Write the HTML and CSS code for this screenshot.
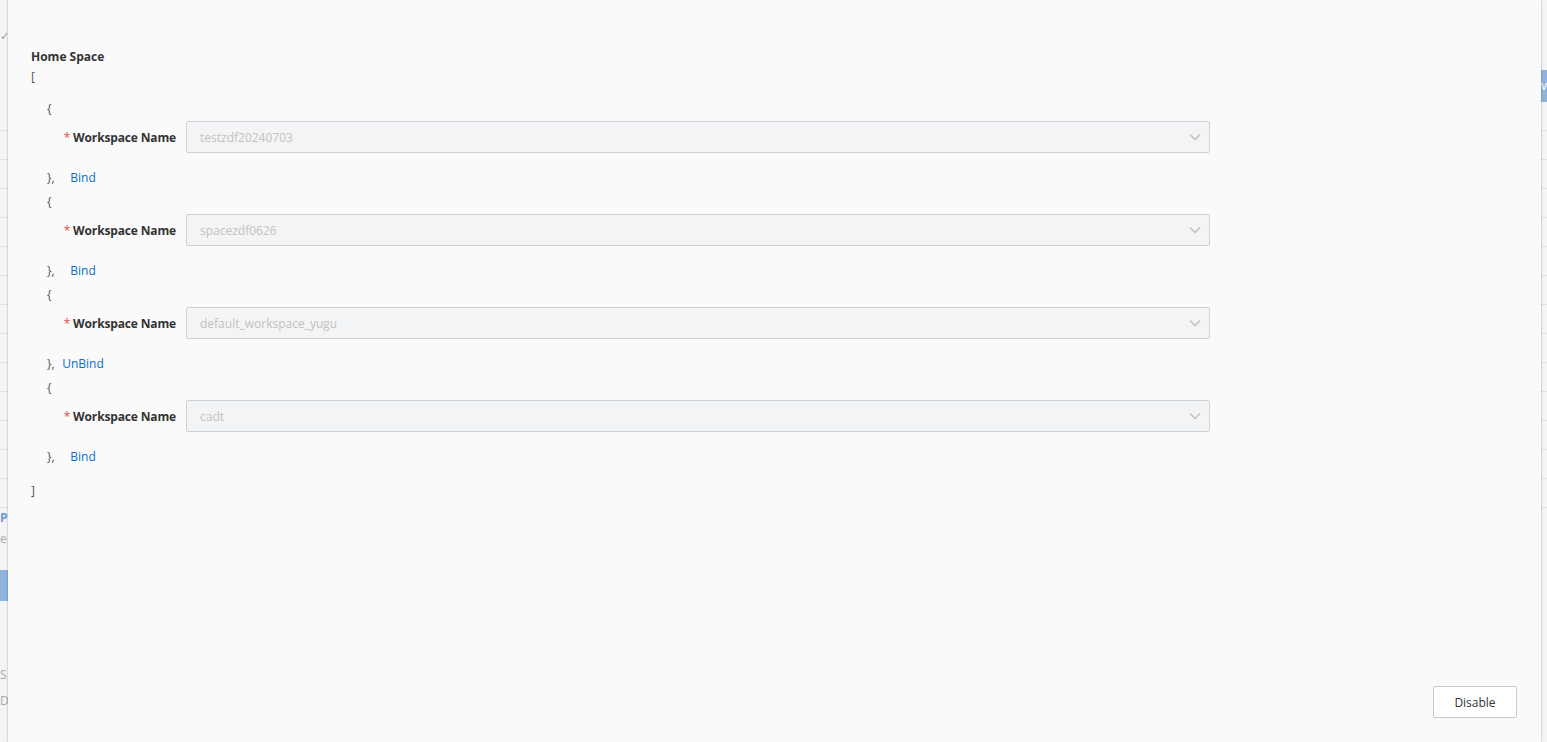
FILE: index.html
```html
<!DOCTYPE html>
<html>
<head>
    <link rel="stylesheet" href="styles.css">
</head>
<body>
    <div class="page">
        <div class="page-top">
            <span class="check">&#10003;</span>
            <button class="page-action">v</button>
        </div>
        <div class="page-table">
            <div class="page-row"></div>
            <div class="page-row"></div>
            <div class="page-row"></div>
            <div class="page-row"></div>
            <div class="page-row"></div>
            <div class="page-row"></div>
            <div class="page-row"></div>
            <div class="page-row"></div>
            <div class="page-row"></div>
            <div class="page-row"></div>
            <div class="page-row"></div>
            <div class="page-row"></div>
            <div class="page-row"></div>
            <div class="page-row"></div>
        </div>
        <div class="page-foot">
            <div class="page-link">P</div>
            <div class="page-text">e</div>
            <div class="page-bar"></div>
            <div class="page-text lower">S</div>
            <div class="page-text">D</div>
        </div>
    </div>

    <div class="drawer">
        <div class="drawer-body">
            <div class="field-title">Home Space</div>
            <div class="bracket">[</div>

            <div class="ws-list">
                <div class="ws-item">
                    <div class="brace">{</div>
                    <div class="form-row">
                        <label class="form-label"><span class="req">*</span>Workspace Name</label>
                        <div class="select is-disabled">
                            <span class="select-value">testzdf20240703</span>
                            <svg class="chevron" width="12" height="8" viewBox="0 0 12 8"><polyline points="1,1.5 6,6.5 11,1.5" fill="none" stroke="#c4c4c4" stroke-width="1.6"/></svg>
                        </div>
                    </div>
                    <div class="brace-end"><span>},</span><a class="link-btn">Bind</a></div>
                </div>

                <div class="ws-item">
                    <div class="brace">{</div>
                    <div class="form-row">
                        <label class="form-label"><span class="req">*</span>Workspace Name</label>
                        <div class="select is-disabled">
                            <span class="select-value">spacezdf0626</span>
                            <svg class="chevron" width="12" height="8" viewBox="0 0 12 8"><polyline points="1,1.5 6,6.5 11,1.5" fill="none" stroke="#c4c4c4" stroke-width="1.6"/></svg>
                        </div>
                    </div>
                    <div class="brace-end"><span>},</span><a class="link-btn">Bind</a></div>
                </div>

                <div class="ws-item">
                    <div class="brace">{</div>
                    <div class="form-row">
                        <label class="form-label"><span class="req">*</span>Workspace Name</label>
                        <div class="select is-disabled">
                            <span class="select-value">default_workspace_yugu</span>
                            <svg class="chevron" width="12" height="8" viewBox="0 0 12 8"><polyline points="1,1.5 6,6.5 11,1.5" fill="none" stroke="#c4c4c4" stroke-width="1.6"/></svg>
                        </div>
                    </div>
                    <div class="brace-end"><span>},</span><a class="link-btn">UnBind</a></div>
                </div>

                <div class="ws-item">
                    <div class="brace">{</div>
                    <div class="form-row">
                        <label class="form-label"><span class="req">*</span>Workspace Name</label>
                        <div class="select is-disabled">
                            <span class="select-value">cadt</span>
                            <svg class="chevron" width="12" height="8" viewBox="0 0 12 8"><polyline points="1,1.5 6,6.5 11,1.5" fill="none" stroke="#c4c4c4" stroke-width="1.6"/></svg>
                        </div>
                    </div>
                    <div class="brace-end"><span>},</span><a class="link-btn">Bind</a></div>
                </div>
            </div>

            <div class="bracket closing">]</div>
        </div>

        <div class="drawer-footer">
            <button class="btn">Disable</button>
        </div>
    </div>
</body>
</html>
```

FILE: styles.css
```css
body {
    margin: 0;
    padding: 0;
    height: 742px;
    overflow: hidden;
    background-color: #f2f2f2;
    font-family: "Open Sans", "Noto Sans", Arial, sans-serif;
    font-size: 12px;
    color: #333333;
}

/* page behind the drawer, only its edges show */
.page {
    display: flex;
    flex-direction: column;
    height: 742px;
    background-color: #f4f4f4;
}

.page-top {
    display: flex;
    justify-content: space-between;
    align-items: flex-start;
    height: 70px;
}

.check {
    color: #9a9a9a;
    font-size: 11px;
    margin-top: 28px;
}

.page-action {
    margin-top: 70px;
    width: 60px;
    height: 32px;
    border: none;
    background-color: #8fb3dc;
    color: #ffffff;
    text-align: right;
    padding: 0 2px 0 0;
    font-size: 12px;
    margin-right: -2px;
}

.page-table {
    display: flex;
    flex-direction: column;
    margin-top: 32px;
}

.page-row {
    height: 28px;
    border-bottom: 1px solid #e2e2e2;
}

.page-foot {
    display: flex;
    flex-direction: column;
}

.page-link {
    color: #6b9ad6;
    font-weight: bold;
    height: 20px;
    line-height: 20px;
}

.page-text {
    color: #aaaaaa;
    height: 22px;
    line-height: 22px;
}

.page-bar {
    margin-top: 20px;
    width: 8px;
    height: 31px;
    background-color: #8fb3dc;
}

.page-text.lower {
    margin-top: 59px;
    height: 30px;
    line-height: 30px;
}

/* drawer */
.drawer {
    position: absolute;
    top: 0;
    bottom: 0;
    left: 8px;
    right: 6px;
    display: flex;
    flex-direction: column;
    background-color: #fafafa;
    box-shadow: 0 0 2px rgba(0, 0, 0, 0.35);
    z-index: 2;
}

.drawer-body {
    flex: 1;
    padding: 47px 23px 0 23px;
}

.field-title {
    font-weight: bold;
    line-height: 20px;
    color: #333333;
}

.bracket {
    line-height: 20px;
    color: #555555;
}

.bracket.closing {
    margin-top: 12px;
}

.ws-list {
    display: flex;
    flex-direction: column;
    padding-top: 10px;
}

.ws-item {
    padding-left: 16px;
}

.brace {
    line-height: 24px;
    color: #555555;
}

.form-row {
    display: flex;
    align-items: center;
    margin-bottom: 12px;
}

.form-label {
    width: 139px;
    box-sizing: border-box;
    padding-right: 10px;
    text-align: right;
    font-weight: bold;
    letter-spacing: -0.15px;
    color: #333333;
    white-space: nowrap;
}

.req {
    color: #e5484d;
    font-weight: normal;
    margin-right: 3px;
}

.select {
    width: 1024px;
    height: 32px;
    box-sizing: border-box;
    display: flex;
    align-items: center;
    justify-content: space-between;
    padding: 0 8px 0 13px;
    border: 1px solid #cdd0d4;
    border-radius: 2px;
}

.select.is-disabled {
    background-color: #f3f4f5;
    color: #c2c2c2;
}

.brace-end {
    display: flex;
    align-items: center;
    line-height: 24px;
    height: 25px;
    color: #555555;
}

.brace-end span {
    width: 9px;
}

.link-btn {
    width: 54px;
    text-align: center;
    color: #0a6fc9;
    cursor: pointer;
}

.drawer-footer {
    display: flex;
    justify-content: flex-end;
    padding: 0 24px 24px 0;
}

.btn {
    width: 84px;
    height: 32px;
    background-color: #ffffff;
    border: 1px solid #c9c9c9;
    border-radius: 2px;
    color: #333333;
    font-family: "Open Sans", "Noto Sans", Arial, sans-serif;
    font-size: 12px;
    cursor: pointer;
}
```
